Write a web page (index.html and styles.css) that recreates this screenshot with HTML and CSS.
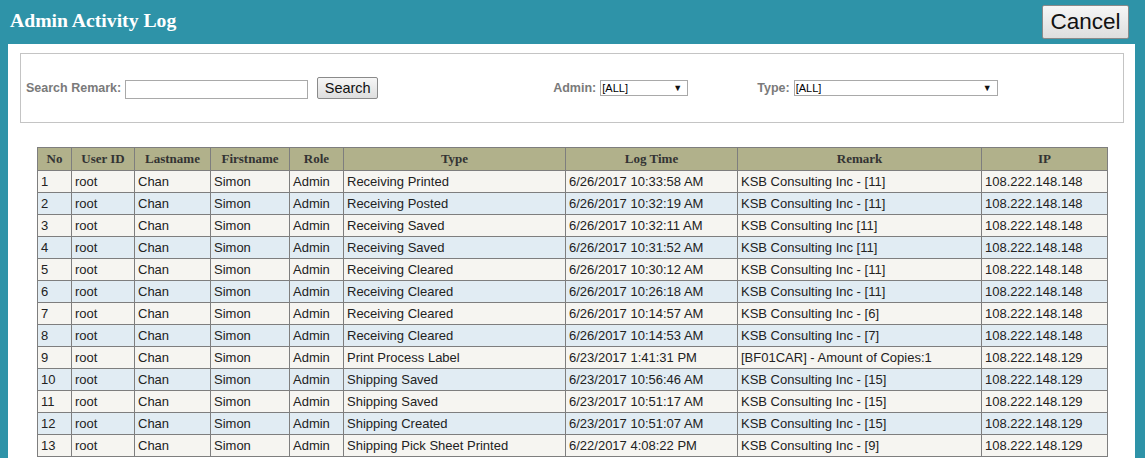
FILE: index.html
```html
<!DOCTYPE html>
<html>
<head>
<meta charset="utf-8">
<title>Admin Activity Log</title>
<link rel="stylesheet" href="styles.css">
</head>
<body>
<header class="topbar">
  <h1 class="title">Admin Activity Log</h1>
  <button class="btn-cancel">Cancel</button>
</header>
<main class="panel">
  <section class="filters">
    <div class="group group-search">
      <label class="flabel">Search Remark:</label>
      <input class="search-input" type="text">
      <button class="btn-search">Search</button>
    </div>
    <div class="group group-admin">
      <label class="flabel">Admin:</label>
      <div class="dropdown dd-admin"><select><option>[ALL]</option></select><span class="arrow">&#9660;</span></div>
    </div>
    <div class="group group-type">
      <label class="flabel">Type:</label>
      <div class="dropdown dd-type"><select><option>[ALL]</option></select><span class="arrow">&#9660;</span></div>
    </div>
  </section>
  <table class="log">
    <colgroup>
      <col class="c-no"><col class="c-uid"><col class="c-last"><col class="c-first"><col class="c-role"><col class="c-type"><col class="c-time"><col class="c-remark"><col class="c-ip">
    </colgroup>
    <thead>
      <tr><th>No</th><th>User ID</th><th>Lastname</th><th>Firstname</th><th>Role</th><th>Type</th><th>Log Time</th><th>Remark</th><th>IP</th></tr>
    </thead>
    <tbody>
      <tr><td>1</td><td>root</td><td>Chan</td><td>Simon</td><td>Admin</td><td>Receiving Printed</td><td>6/26/2017 10:33:58 AM</td><td>KSB Consulting Inc - [11]</td><td>108.222.148.148</td></tr>
      <tr><td>2</td><td>root</td><td>Chan</td><td>Simon</td><td>Admin</td><td>Receiving Posted</td><td>6/26/2017 10:32:19 AM</td><td>KSB Consulting Inc - [11]</td><td>108.222.148.148</td></tr>
      <tr><td>3</td><td>root</td><td>Chan</td><td>Simon</td><td>Admin</td><td>Receiving Saved</td><td>6/26/2017 10:32:11 AM</td><td>KSB Consulting Inc [11]</td><td>108.222.148.148</td></tr>
      <tr><td>4</td><td>root</td><td>Chan</td><td>Simon</td><td>Admin</td><td>Receiving Saved</td><td>6/26/2017 10:31:52 AM</td><td>KSB Consulting Inc [11]</td><td>108.222.148.148</td></tr>
      <tr><td>5</td><td>root</td><td>Chan</td><td>Simon</td><td>Admin</td><td>Receiving Cleared</td><td>6/26/2017 10:30:12 AM</td><td>KSB Consulting Inc - [11]</td><td>108.222.148.148</td></tr>
      <tr><td>6</td><td>root</td><td>Chan</td><td>Simon</td><td>Admin</td><td>Receiving Cleared</td><td>6/26/2017 10:26:18 AM</td><td>KSB Consulting Inc - [11]</td><td>108.222.148.148</td></tr>
      <tr><td>7</td><td>root</td><td>Chan</td><td>Simon</td><td>Admin</td><td>Receiving Cleared</td><td>6/26/2017 10:14:57 AM</td><td>KSB Consulting Inc - [6]</td><td>108.222.148.148</td></tr>
      <tr><td>8</td><td>root</td><td>Chan</td><td>Simon</td><td>Admin</td><td>Receiving Cleared</td><td>6/26/2017 10:14:53 AM</td><td>KSB Consulting Inc - [7]</td><td>108.222.148.148</td></tr>
      <tr><td>9</td><td>root</td><td>Chan</td><td>Simon</td><td>Admin</td><td>Print Process Label</td><td>6/23/2017 1:41:31 PM</td><td>[BF01CAR] - Amount of Copies:1</td><td>108.222.148.129</td></tr>
      <tr><td>10</td><td>root</td><td>Chan</td><td>Simon</td><td>Admin</td><td>Shipping Saved</td><td>6/23/2017 10:56:46 AM</td><td>KSB Consulting Inc - [15]</td><td>108.222.148.129</td></tr>
      <tr><td>11</td><td>root</td><td>Chan</td><td>Simon</td><td>Admin</td><td>Shipping Saved</td><td>6/23/2017 10:51:17 AM</td><td>KSB Consulting Inc - [15]</td><td>108.222.148.129</td></tr>
      <tr><td>12</td><td>root</td><td>Chan</td><td>Simon</td><td>Admin</td><td>Shipping Created</td><td>6/23/2017 10:51:07 AM</td><td>KSB Consulting Inc - [15]</td><td>108.222.148.129</td></tr>
      <tr><td>13</td><td>root</td><td>Chan</td><td>Simon</td><td>Admin</td><td>Shipping Pick Sheet Printed</td><td>6/22/2017 4:08:22 PM</td><td>KSB Consulting Inc - [9]</td><td>108.222.148.129</td></tr>
    </tbody>
  </table>
</main>
</body>
</html>
```

FILE: styles.css
```css
html, body {
  margin: 0;
  padding: 0;
}
body {
  background: #2e93a8;
  font-family: "Liberation Sans", Arial, sans-serif;
  color: #222;
}
.topbar {
  height: 44px;
  display: flex;
  align-items: flex-start;
  justify-content: space-between;
}
.title {
  margin: 0;
  padding: 8px 0 0 10px;
  font-family: "Liberation Serif", "Times New Roman", serif;
  font-weight: bold;
  font-size: 19.7px;
  line-height: 24px;
  color: #fff;
}
.btn-cancel {
  margin: 5px 16px 0 0;
  width: 87px;
  height: 34px;
  padding: 0;
  font-family: "Liberation Sans", Arial, sans-serif;
  font-size: 22.5px;
  color: #111;
  background: linear-gradient(#f6f6f6, #dedede);
  border: 1px solid #8a8a8a;
  border-radius: 2px;
}
.panel {
  background: #fff;
  margin: 0 10px 0 8px;
  padding: 9px 11px 30px 12px;
  min-height: 420px;
}
.filters {
  height: 68px;
  border: 1px solid #c4c4c4;
  display: flex;
  align-items: center;
  padding-left: 5px;
}
.group {
  display: flex;
  align-items: center;
}
.group-admin {
  margin-left: 175px;
}
.group-type {
  margin-left: 69px;
}
.flabel {
  font-family: "Liberation Sans", Arial, sans-serif;
  font-weight: bold;
  font-size: 12.5px;
  color: #7a7a7a;
  margin-right: 4px;
}
.search-input {
  box-sizing: border-box;
  width: 183px;
  height: 19px;
  margin: 2px 0 0 0;
  border: 1px solid #a9a9a9;
  padding: 0 2px;
}
.btn-search {
  box-sizing: border-box;
  margin-left: 9px;
  width: 61px;
  height: 22px;
  padding: 0;
  font-family: "Liberation Sans", Arial, sans-serif;
  font-size: 14.5px;
  color: #111;
  background: linear-gradient(#f6f6f6, #dedede);
  border: 1px solid #8a8a8a;
  border-radius: 2px;
}
.dropdown {
  box-sizing: border-box;
  display: flex;
  align-items: center;
  height: 16px;
  border: 1px solid #a9a9a9;
  background: #fff;
}
.dd-admin { width: 88px; }
.dd-type { width: 204px; }
.dropdown select {
  -webkit-appearance: none;
  appearance: none;
  border: 0;
  outline: 0;
  background: transparent;
  flex: 1;
  min-width: 0;
  height: 14px;
  padding: 0 0 0 1px;
  font-family: "Liberation Sans", Arial, sans-serif;
  font-size: 11px;
  color: #000;
}
.arrow {
  font-size: 9px;
  color: #111;
  padding-right: 5px;
}
.log {
  margin: 24px 0 0 17px;
  width: 1070px;
  border-collapse: collapse;
  table-layout: fixed;
}
.c-no { width: 34px; }
.c-uid { width: 63px; }
.c-last { width: 76px; }
.c-first { width: 79px; }
.c-role { width: 54px; }
.c-type { width: 222px; }
.c-time { width: 172px; }
.c-remark { width: 244px; }
.c-ip { width: 126px; }
.log th {
  background: #b1b18b;
  border: 1px solid #7e7e7e;
  height: 22px;
  padding: 0 4px;
  font-family: "Liberation Serif", "Times New Roman", serif;
  font-weight: bold;
  font-size: 13px;
  color: #333;
  text-align: center;
}
.log td {
  border: 1px solid #7e7e7e;
  height: 21px;
  padding: 0 3px;
  font-size: 13px;
  color: #222;
  white-space: nowrap;
  overflow: hidden;
}
.log tbody tr:nth-child(odd) td {
  background: #f6f5f1;
}
.log tbody tr:nth-child(even) td {
  background: #e1ecf3;
}
```
